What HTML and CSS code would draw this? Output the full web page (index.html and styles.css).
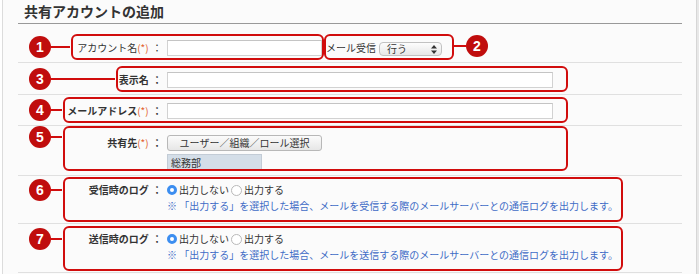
FILE: index.html
```html
<!DOCTYPE html>
<html lang="ja">
<head>
    <meta charset="UTF-8">
    <meta name="viewport" content="width=device-width, initial-scale=1.0">
    <title>共有アカウントの追加</title>
    <link rel="stylesheet" href="styles.css">
</head>
<body>
    <div class="page">
        <h1 class="title">共有アカウントの追加</h1>

        <div class="form">
            <div class="row row-account">
                <div class="label plain">アカウント名<span class="req">(*)</span>&#8196;：</div>
                <input class="text short" type="text">
                <span class="sub-label">メール受信</span>
                <div class="select">
                    <span>行う</span>
                    <svg width="6" height="9" viewBox="0 0 6 9"><path d="M3 0L6 3.5H0z M3 9L0 5.5H6z" fill="#333"/></svg>
                </div>
            </div>

            <div class="row row-name">
                <div class="label">表示名&#8196;：</div>
                <input class="text long" type="text">
            </div>

            <div class="row row-mail">
                <div class="label">メールアドレス<span class="req">(*)</span>&#8196;：</div>
                <input class="text long" type="text">
            </div>

            <div class="row row-share">
                <div class="label">共有先<span class="req">(*)</span>&#8196;：</div>
                <div class="field">
                    <button class="btn" type="button">ユーザー／組織／ロール選択</button>
                    <div class="picked">総務部</div>
                </div>
            </div>

            <div class="row row-log">
                <div class="label">受信時のログ&#8196;：</div>
                <div class="field">
                    <div class="choices">
                        <span class="radio on"></span><span class="choice">出力しない</span>
                        <span class="radio"></span><span class="choice">出力する</span>
                    </div>
                    <div class="hint">※ 「出力する」を選択した場合、メールを受信する際のメールサーバーとの通信ログを出力します。</div>
                </div>
            </div>

            <div class="row row-log second">
                <div class="label">送信時のログ&#8196;：</div>
                <div class="field">
                    <div class="choices">
                        <span class="radio on"></span><span class="choice">出力しない</span>
                        <span class="radio"></span><span class="choice">出力する</span>
                    </div>
                    <div class="hint">※ 「出力する」を選択した場合、メールを送信する際のメールサーバーとの通信ログを出力します。</div>
                </div>
            </div>
        </div>
    </div>

    <!-- annotation layer -->
    <div class="callouts">
        <div class="frame f1"></div>
        <div class="frame f2"></div>
        <div class="frame f3"></div>
        <div class="frame f4"></div>
        <div class="frame f5"></div>
        <div class="frame f6"></div>
        <div class="frame f7"></div>

        <div class="badge b1">1</div>
        <div class="badge b2 flip">2</div>
        <div class="badge b3">3</div>
        <div class="badge b4">4</div>
        <div class="badge b5">5</div>
        <div class="badge b6">6</div>
        <div class="badge b7">7</div>
    </div>
</body>
</html>
```

FILE: styles.css
```css
body {
    margin: 0;
    padding: 0;
    background-color: #fff;
    font-family: "Noto Sans CJK JP", "Noto Sans", sans-serif;
    font-size: 10px;
    color: #333;
    position: relative;
}
.page {
    margin-left: 2px;
    width: 664px;
    height: 274px;
    padding: 0 14px 0 15px;
    background-color: #fbfbfb;
    border-left: 1px solid #dcdcdc;
    border-right: 1px solid #d6d6d6;
    box-shadow: 2px 0 0 #e8e8e8;
}
.title {
    margin: 0;
    padding-left: 6px;
    height: 23px;
    line-height: 23px;
    font-size: 14px;
    font-weight: bold;
    color: #333;
    border-bottom: 1px solid #999;
}
.row {
    display: flex;
    align-items: flex-start;
    border-bottom: 1px solid #e0e0e0;
}
.row-account {
    padding: 16px 0 6px;
}
.row-name {
    padding: 9px 0 6px;
}
.row-mail {
    padding: 8px 0 6px;
}
.row-share {
    padding: 9px 0 5px;
}
.row-log {
    padding: 6px 0 9px;
}
.row-log.second {
    padding-top: 7px;
}
.label {
    width: 144px;
    flex: none;
    text-align: right;
    line-height: 16px;
    font-weight: bold;
    white-space: nowrap;
}
.label.plain {
    font-weight: normal;
}
.req {
    color: #e2612e;
    font-weight: normal;
}
.text {
    box-sizing: border-box;
    height: 16px;
    margin: 0 0 0 5px;
    padding: 0;
    background-color: #fff;
    border: 1px solid #d2d2d2;
    border-top-color: #c4c4c4;
}
.text.short {
    width: 155px;
}
.text.long {
    width: 386px;
}
.sub-label {
    margin-left: 4px;
    line-height: 16px;
}
.select {
    box-sizing: border-box;
    width: 63px;
    height: 14px;
    margin: 2px 0 0 3px;
    padding: 0 4px 0 7px;
    display: flex;
    align-items: center;
    justify-content: space-between;
    border: 1px solid #c2c2c2;
    border-radius: 4px;
    background: linear-gradient(#fdfdfd, #e7e7e7);
    line-height: 12px;
}
.field {
    margin-left: 5px;
    display: flex;
    flex-direction: column;
    align-items: flex-start;
}
.btn {
    box-sizing: border-box;
    width: 155px;
    height: 16px;
    margin: 0;
    padding: 0;
    font-family: inherit;
    font-size: 10px;
    line-height: 14px;
    color: #333;
    border: 1px solid #b8b8b8;
    border-radius: 3px;
    background: linear-gradient(#fbfbfb, #e6e6e6);
}
.picked {
    box-sizing: border-box;
    width: 95px;
    height: 16px;
    margin-top: 3px;
    padding-left: 3px;
    line-height: 15px;
    background-color: #d4dee8;
    border: 1px solid #c3ccd6;
}
.choices {
    display: flex;
    align-items: center;
    height: 16px;
}
.radio {
    box-sizing: border-box;
    width: 11px;
    height: 11px;
    border-radius: 50%;
    border: 1px solid #b9b9b9;
    background-color: #fff;
    margin-left: 2px;
}
.radio.on {
    width: 10px;
    height: 10px;
    margin-left: 0;
    border: 3px solid #3c8ef0;
    background-color: #fff;
}
.choice {
    margin-left: 2px;
    line-height: 16px;
}
.hint {
    color: #3f6cc6;
    line-height: 16px;
    white-space: nowrap;
}

/* callouts */
.callouts {
    position: absolute;
    top: 0;
    left: 0;
    width: 700px;
    height: 274px;
    pointer-events: none;
}
.frame {
    position: absolute;
    box-sizing: border-box;
    border: 2px solid #d10d0d;
    border-radius: 6px;
}
.f1 { left: 71px; top: 34px; width: 253px; height: 26px; }
.f2 { left: 324px; top: 34px; width: 130px; height: 26px; }
.f3 { left: 116px; top: 66px; width: 452px; height: 26px; }
.f4 { left: 63px; top: 97px; width: 505px; height: 26px; }
.f5 { left: 63px; top: 126px; width: 505px; height: 45px; }
.f6 { left: 63px; top: 177px; width: 560px; height: 45px; }
.f7 { left: 63px; top: 226px; width: 560px; height: 45px; }

.badge {
    position: absolute;
    width: 22px;
    height: 22px;
    margin: -11px 0 0 -11px;
    border-radius: 50%;
    background-color: #c00d0d;
    color: #fff;
    font-family: "Liberation Sans", Arial, sans-serif;
    font-weight: bold;
    font-size: 14px;
    line-height: 22px;
    text-align: center;
    --line: 12px;
}
.badge::after {
    content: "";
    position: absolute;
    top: 10px;
    left: 21px;
    width: var(--line);
    height: 2px;
    background-color: #d10d0d;
}
.badge.flip::after {
    left: auto;
    right: 21px;
}
.b1 { left: 40px; top: 47px; --line: 20px; }
.b2 { left: 477px; top: 46px; --line: 13px; }
.b3 { left: 40px; top: 79px; --line: 65px; }
.b4 { left: 40px; top: 110px; }
.b5 { left: 40px; top: 137px; }
.b6 { left: 40px; top: 190px; }
.b7 { left: 40px; top: 239px; }
```
